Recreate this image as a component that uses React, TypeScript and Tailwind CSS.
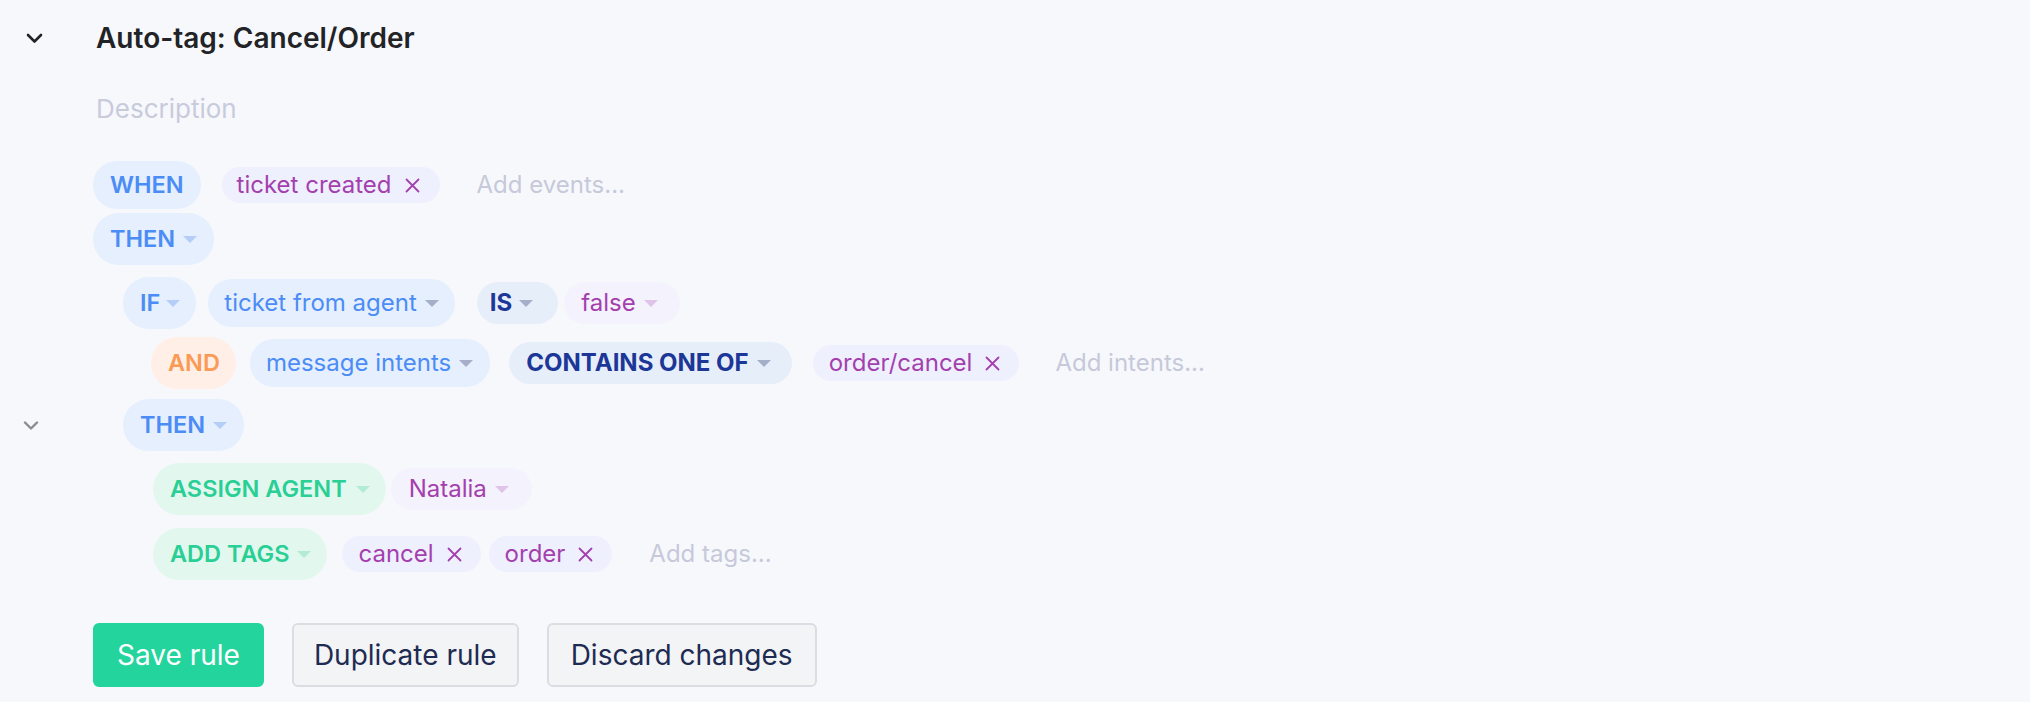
import React from "react";

const Arrow = ({ color }: { color: string }) => (
  <svg width="14" height="7" viewBox="0 0 14 7" className="shrink-0">
    <path d="M0 0 L14 0 L7 7 Z" fill={color} />
  </svg>
);

const Cross = () => (
  <svg width="15" height="15" viewBox="0 0 15 15" className="shrink-0">
    <path d="M1.5 1.5 L13.5 13.5 M13.5 1.5 L1.5 13.5" stroke="#a43fae" strokeWidth="1.8" strokeLinecap="round" />
  </svg>
);

const Chip = ({ label, extra }: { label: string; extra: string }) => (
  <div className={`flex h-[36px] items-center gap-[13px] rounded-full bg-[#eef0fe] text-[24px] text-[#a43fae] ${extra}`}>
    <span>{label}</span>
    <Cross />
  </div>
);

export default function App() {
  return (
    <div className="min-h-screen bg-[#f7f8fc] pt-[18px] font-[Inter,sans-serif]">
      {/* Title */}
      <div className="flex h-[40px] items-center">
        <div className="flex w-[93px] pl-[26px]">
          <svg width="17" height="11" viewBox="0 0 17 11">
            <path d="M2 2 L8.5 8.5 L15 2" fill="none" stroke="#222326" strokeWidth="2.6" strokeLinecap="round" strokeLinejoin="round" />
          </svg>
        </div>
        <div className="pl-[3px] text-[28px] font-semibold text-[#222326]">Auto-tag: Cancel/Order</div>
      </div>

      {/* Description */}
      <div className="mt-[32px] flex h-[36px] items-center pl-[96px] text-[26px] text-[#c8cbdc]">Description</div>

      {/* WHEN row */}
      <div className="mt-[35px] flex h-[48px] items-center pl-[93px]">
        <div className="flex h-[48px] items-center rounded-full bg-[#e5effd] px-[17px] text-[23.5px] font-semibold text-[#4b8cf6]">WHEN</div>
        <Chip label="ticket created" extra="ml-[21px] pl-[15px] pr-[20px]" />
        <div className="ml-[37px] text-[24px] text-[#c6c9da]">Add events...</div>
      </div>

      {/* THEN row */}
      <div className="mt-[4px] flex h-[52px] items-center pl-[93px]">
        <div className="flex h-[52px] items-center gap-[8px] rounded-full bg-[#e5effd] pl-[17px] pr-[17px] text-[23.5px] font-semibold text-[#4b8cf6]">
          <span>THEN</span>
          <Arrow color="#b5cef8" />
        </div>
      </div>

      {/* IF row */}
      <div className="mt-[12px] flex h-[52px] items-center pl-[123px]">
        <div className="flex h-[52px] items-center gap-[6px] rounded-full bg-[#e5effd] pl-[17px] pr-[16px] text-[23.5px] font-semibold text-[#4b8cf6]">
          <span>IF</span>
          <Arrow color="#b5cef8" />
        </div>
        <div className="ml-[12px] flex h-[48px] items-center gap-[8px] rounded-full bg-[#e5effd] pl-[16px] pr-[16px] text-[24px] text-[#4b8cf6]">
          <span>ticket from agent</span>
          <Arrow color="#a5afca" />
        </div>
        <div className="ml-[22px] flex h-[42px] items-center gap-[7px] rounded-full bg-[#e6eefa] pl-[13px] pr-[25px] text-[24px] font-bold text-[#1c3797]">
          <span>IS</span>
          <Arrow color="#a5afca" />
        </div>
        <div className="ml-[6px] flex h-[42px] items-center gap-[8px] rounded-full bg-[#f4f2fc] pl-[17px] pr-[22px] text-[24px] text-[#a43fae]">
          <span>false</span>
          <Arrow color="#dfc3e9" />
        </div>
      </div>

      {/* AND row */}
      <div className="mt-[8px] flex h-[52px] items-center pl-[151px]">
        <div className="flex h-[52px] items-center rounded-full bg-[#ffefe6] pl-[17px] pr-[16px] text-[23.5px] font-semibold text-[#fa9a55]">AND</div>
        <div className="ml-[14px] flex h-[48px] items-center gap-[8px] rounded-full bg-[#e5effd] pl-[16px] pr-[17px] text-[24px] text-[#4b8cf6]">
          <span>message intents</span>
          <Arrow color="#a5afca" />
        </div>
        <div className="ml-[19px] flex h-[42px] items-center gap-[8px] rounded-full bg-[#e6eefa] pl-[17px] pr-[21px] text-[24px] font-bold text-[#1c3797]">
          <span>CONTAINS ONE OF</span>
          <Arrow color="#a5afca" />
        </div>
        <Chip label="order/cancel" extra="ml-[21px] pl-[16px] pr-[19px]" />
        <div className="ml-[36px] text-[24px] text-[#c6c9da]">Add intents...</div>
      </div>

      {/* THEN row 2 */}
      <div className="mt-[10px] flex h-[52px] items-center">
        <div className="flex w-[123px] pl-[23px]">
          <svg width="16" height="9" viewBox="0 0 16 9">
            <path d="M2 1.5 L8 7.5 L14 1.5" fill="none" stroke="#8c8c8c" strokeWidth="2.4" strokeLinecap="round" strokeLinejoin="round" />
          </svg>
        </div>
        <div className="flex h-[52px] items-center gap-[8px] rounded-full bg-[#e5effd] pl-[17px] pr-[17px] text-[23.5px] font-semibold text-[#4b8cf6]">
          <span>THEN</span>
          <Arrow color="#b5cef8" />
        </div>
      </div>

      {/* ASSIGN AGENT row */}
      <div className="mt-[12px] flex h-[52px] items-center pl-[153px]">
        <div className="flex h-[52px] items-center gap-[9px] rounded-full bg-[#e2f8ef] pl-[17px] pr-[16px] text-[23.5px] font-semibold text-[#29cf94]">
          <span>ASSIGN AGENT</span>
          <Arrow color="#b3ebd4" />
        </div>
        <div className="ml-[5px] flex h-[42px] items-center gap-[8px] rounded-full bg-[#f4f2fc] pl-[18px] pr-[23px] text-[24px] text-[#a43fae]">
          <span>Natalia</span>
          <Arrow color="#dfc3e9" />
        </div>
      </div>

      {/* ADD TAGS row */}
      <div className="mt-[13px] flex h-[52px] items-center pl-[153px]">
        <div className="flex h-[52px] items-center gap-[8px] rounded-full bg-[#e2f8ef] pl-[17px] pr-[16px] text-[23.5px] font-semibold text-[#29cf94]">
          <span>ADD TAGS</span>
          <Arrow color="#b3ebd4" />
        </div>
        <Chip label="cancel" extra="ml-[15px] pl-[16px] pr-[19px]" />
        <Chip label="order" extra="ml-[8px] pl-[16px] pr-[19px]" />
        <div className="ml-[37px] text-[24px] text-[#c6c9da]">Add tags...</div>
      </div>

      {/* Buttons */}
      <div className="mt-[43px] flex items-center gap-[28px] pl-[93px]">
        <button className="flex h-[64px] items-center rounded-[6px] border-2 border-[#23d49d] bg-[#23d49d] px-[22px] text-[28px] text-white">Save rule</button>
        <button className="flex h-[64px] items-center rounded-[6px] border-2 border-[#dcdde3] bg-[#f3f4f6] px-[20px] text-[28px] text-[#1e2b52]">Duplicate rule</button>
        <button className="flex h-[64px] items-center rounded-[6px] border-2 border-[#dcdde3] bg-[#f3f4f6] px-[22px] text-[28px] text-[#1e2b52]">Discard changes</button>
      </div>
    </div>
  );
}
